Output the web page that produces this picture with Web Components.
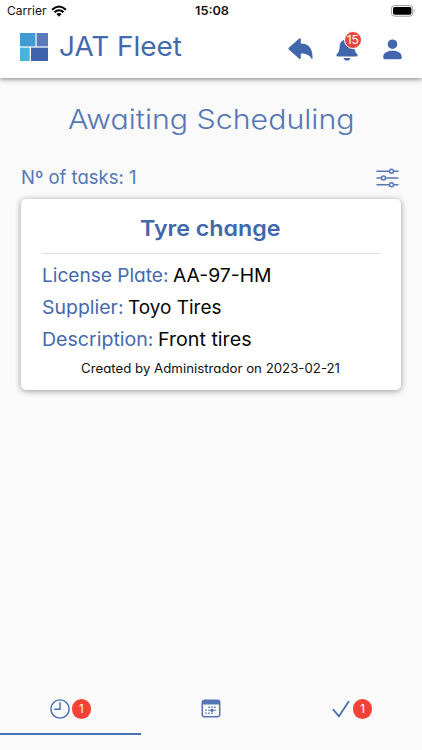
<!DOCTYPE html>
<html lang="en">
<head>
<meta charset="utf-8">
<meta name="viewport" content="width=device-width">
<title>JAT Fleet</title>
<style>
html,body{margin:0;height:100%;overflow:hidden}
</style>
</head>
<body>
<fleet-app></fleet-app>
<script>
const define = (name, html, ready) => {
  const template = document.createElement('template');
  template.innerHTML = html;
  customElements.define(name, class extends HTMLElement {
    connectedCallback() {
      if (this.shadowRoot) return;
      const root = this.attachShadow({ mode: 'open' });
      root.append(template.content.cloneNode(true));
      if (ready) ready(this, root);
    }
  });
};

// Text that is widened or narrowed to fill the given width.
define('fit-text', `
<style>:host{display:inline-block;white-space:nowrap;text-align:left}span{display:inline-block;white-space:pre;transform-origin:0 50%}</style>
<span><slot></slot></span>`, (host, root) => {
  const span = root.querySelector('span');
  const want = parseFloat(host.getAttribute('width'));
  const natural = span.getBoundingClientRect().width;
  span.style.transform = 'scaleX(' + want / natural + ')';
  host.style.width = want + 'px';
});

define('count-badge', `
<style>:host{display:flex;align-items:center;justify-content:center;box-sizing:border-box;width:19.5px;height:19.5px;border-radius:50%;background:#f44336;color:#fff;font-size:11.5px;line-height:1}span{display:block;padding-top:1px}</style>
<span><slot></slot></span>`);

define('status-bar', `
<style>
:host{display:grid;grid-template-columns:1fr auto 1fr;align-items:center;height:22px;padding:0 6px 0 7px;color:#111;font-size:12px;line-height:22px;font-feature-settings:normal}
.l{display:flex;gap:4px;align-items:center}.time{font-weight:600}
.r{justify-self:end;display:flex;margin-top:-1px}svg{display:block}
</style>
<div class="l"><fit-text width="39.5">Carrier</fit-text>
<svg width="16" height="12" viewBox="0 0 16 12" fill="none" stroke="#000" stroke-width="2.1"><path d="M1 4.7Q8-1.7 15 4.7M3.5 7.3Q8 3.2 12.5 7.3"/><path d="M5.4 9Q8 6.8 10.6 9L8 11.7Z" fill="#000" stroke="none"/></svg></div>
<fit-text class="time" width="34">15:08</fit-text>
<div class="r"><svg width="26" height="12" viewBox="0 0 26 12"><rect x="1.4" y=".6" width="21.4" height="10.6" rx="3.2" fill="#fff" stroke="#999"/><rect x="3" y="2.1" width="18.4" height="7.6" rx="1.7"/><path d="M24 4Q25.4 5.9 24 7.8Z" fill="#888"/></svg></div>`);

define('app-header', `
<style>
:host{display:block;height:77.5px;background:#fff;box-shadow:0 1px 5px rgba(0,0,0,.5);position:relative}
.bar{display:flex;align-items:center;height:50px;padding:0 20px 0 20px}
svg{display:block}.title{font-size:27px;line-height:48px;margin:0 0 0 11px;height:48px}
.actions{margin-left:auto;display:flex;align-items:center;padding-top:4px}
.bell{position:relative;margin:0 24.5px 0 21.5px}.bell count-badge{position:absolute;left:9px;top:-7px;width:18.5px;height:18.5px;border:1px solid #fff;background:#e9473d;font-size:12px}
</style>
<status-bar></status-bar>
<div class="bar">
<svg width="28" height="28" viewBox="0 0 28 28"><path fill="#429bd3" d="M0 0h15.5v13.4H0z"/><path fill="#5c7abb" d="M16.7 0H28v13.4H16.7z"/><path fill="#4bb3da" d="M0 14.6h9.7V28H0z"/><path fill="#3f64ae" d="M11 14.6h17V28H11z"/></svg>
<fit-text class="title" width="123">JAT Fleet</fit-text>
<div class="actions">
<svg width="25" height="22" viewBox="0 0 25 22" fill="#4166ac"><path d="M11.2.4Q12.8-.3 12.8 1.5V5.6C20 5.8 24.6 9.3 24.6 20.2Q24.5 21.5 23.4 20.4C21 16.9 18 15.7 12.8 15.6V19.7Q12.7 21.5 11.2 20.7L.8 11.5Q0 10.6.8 9.7Z"/></svg>
<div class="bell"><svg width="24" height="23" viewBox="0 0 24 23" fill="#4166ac"><path d="M12 0c-1.1 0-1.9.6-1.9 1.6C6.5 2.5 4.6 5 4.6 8.5c0 4-.8 5.7-2.7 7.6-1 1.1-.5 2.4.8 2.4h18.6c1.3 0 1.8-1.3.8-2.4-1.9-1.9-2.7-3.6-2.7-7.6 0-3.5-1.9-6-5.5-6.9C13.900.600 13.100 0 12 0zM8.500 20h7c-.4 1.600-1.700 2.600-3.500 2.600S8.900 21.600 8.500 20z"/></svg><count-badge>15</count-badge></div>
<svg width="19" height="21" viewBox="0.5 0 19 21" fill="#4166ac"><circle cx="10" cy="5.2" r="4.8"/><path d="M.7 18.300C.7 13.900 4.400 11.700 10 11.700s9.300 2.200 9.300 6.600q0 2-1.700 2H2.400q-1.700 0-1.700-2z"/></svg>
</div></div>`);

define('task-field', `
<style>:host{display:flex;height:32.2px;line-height:32.2px;font-size:18.700px}.v{color:#050505;margin-left:5px}.k{color:#4568ad}</style>
<fit-text class="k"></fit-text><fit-text class="v"></fit-text>`, (host, root) => {
  for (const [cls, name] of [['k', 'label'], ['v', 'value']]) {
    const old = root.querySelector('.' + cls);
    const text = document.createElement('fit-text');
    text.className = cls;
    text.setAttribute('width', host.getAttribute(name + '-width'));
    text.textContent = host.getAttribute(name);
    old.replaceWith(text);
  }
});

define('task-card', `
<style>
:host{display:block;box-sizing:border-box;height:191px;margin:0 21.5px 0 21px;padding:0 21px 0 20.5px;background:#fff;border-radius:5px;box-shadow:0 1px 6px rgba(0,0,0,.4)}
.h{height:55px;box-sizing:border-box;padding-top:4px;line-height:50px;text-align:center;font-size:22px;font-weight:600;color:#4267ac;border-bottom:1px solid #dcdfe3}
.rows{padding-top:6px}.foot{text-align:center;color:#111;font-size:12.700px;line-height:24px}
</style>
<div class="h"><slot name="title"></slot></div>
<div class="rows"><slot></slot></div>
<div class="foot"><slot name="footer"></slot></div>`);

define('tab-bar', `
<style>
:host{display:grid;grid-template-columns:repeat(3,1fr);height:66px;margin-top:auto}
div{display:flex;align-items:center;justify-content:center;box-sizing:border-box;height:50.5px;padding-top:1px;border-bottom:2.4px solid transparent}
.on{border-color:#4a6fb2}.on svg{margin-right:2px}.last svg{margin-right:3px}.last{padding-left:1px}svg{display:block}
</style>
<div class="on"><svg width="20" height="20" viewBox="0 0 20 20" fill="none" stroke="#456aae" stroke-width="1.4"><circle cx="10" cy="10" r="9.100"/><path d="M10 3.300V10.300H4.300"/></svg><count-badge>1</count-badge></div>
<div><svg width="20" height="19" viewBox="0 0 20 19"><rect x="1.300" y="1.300" width="17.400" height="16.500" rx="2.300" fill="none" stroke="#5474b3" stroke-width="1.500"/><path fill="#5474b3" d="M1 3Q1 1 3 1H17Q19 1 19 3V5.500H1Z"/><g stroke="#5474b3" stroke-width="1.400" stroke-dasharray="1.400 1.600"><path d="M7.300 8.300H16M4.300 11.300H16M4.300 14.200H13"/></g><circle cx="11" cy="11.300" r="1.600" fill="#456aae"/></svg></div>
<div class="last"><svg width="18" height="18" viewBox="0 0 18 18" fill="none" stroke="#4b6fb1" stroke-width="1.800" stroke-linecap="round" stroke-linejoin="round"><path d="M1.500 9.800 7 16.300 16.500 1.800"/></svg><count-badge>1</count-badge></div>`);

define('fleet-app', `
<style>
:host{display:flex;flex-direction:column;height:750px;background:#fafafa;color:#4469ad;font-family:Inter,"Liberation Sans",sans-serif;font-feature-settings:"cv11" 1,"ss03" 1}
h1{margin:16.500px 0 0;height:50px;line-height:50px;font-size:27.500px;font-weight:350;text-align:center;color:#5577b5}
.sum{display:flex;align-items:center;justify-content:space-between;padding:0 23.500px 0 21px;height:40px;margin-top:13px;margin-bottom:2px;font-size:18.700px;color:#5577b5}
svg{display:block;margin-top:2px}
</style>
<app-header></app-header>
<h1><fit-text width="286.500">Awaiting Scheduling</fit-text></h1>
<div class="sum"><fit-text width="115.500">Nº of tasks: 1</fit-text>
<svg width="23" height="20" viewBox="0 0 23 20" fill="#fafafa" stroke="#5577b5" stroke-width="1.500"><path d="M.5 3.300H22.500M.5 10H22.500M.5 16.700H22.500"/><circle cx="15.500" cy="3.300" r="2"/><circle cx="7.500" cy="10" r="2"/><circle cx="15.500" cy="16.700" r="2"/></svg></div>
<task-card>
<fit-text slot="title" width="140.500">Tyre change</fit-text>
<task-field label="License Plate:" label-width="126.500" value="AA-97-HM" value-width="98.500"></task-field>
<task-field label="Supplier:" label-width="81.500" value="Toyo Tires" value-width="93.500"></task-field>
<task-field label="Description:" label-width="111.500" value="Front tires" value-width="93.500"></task-field>
<fit-text slot="footer" width="259">Created by Administrador on 2023-02-21</fit-text>
</task-card>
<tab-bar></tab-bar>`);
</script>
</body>
</html>
